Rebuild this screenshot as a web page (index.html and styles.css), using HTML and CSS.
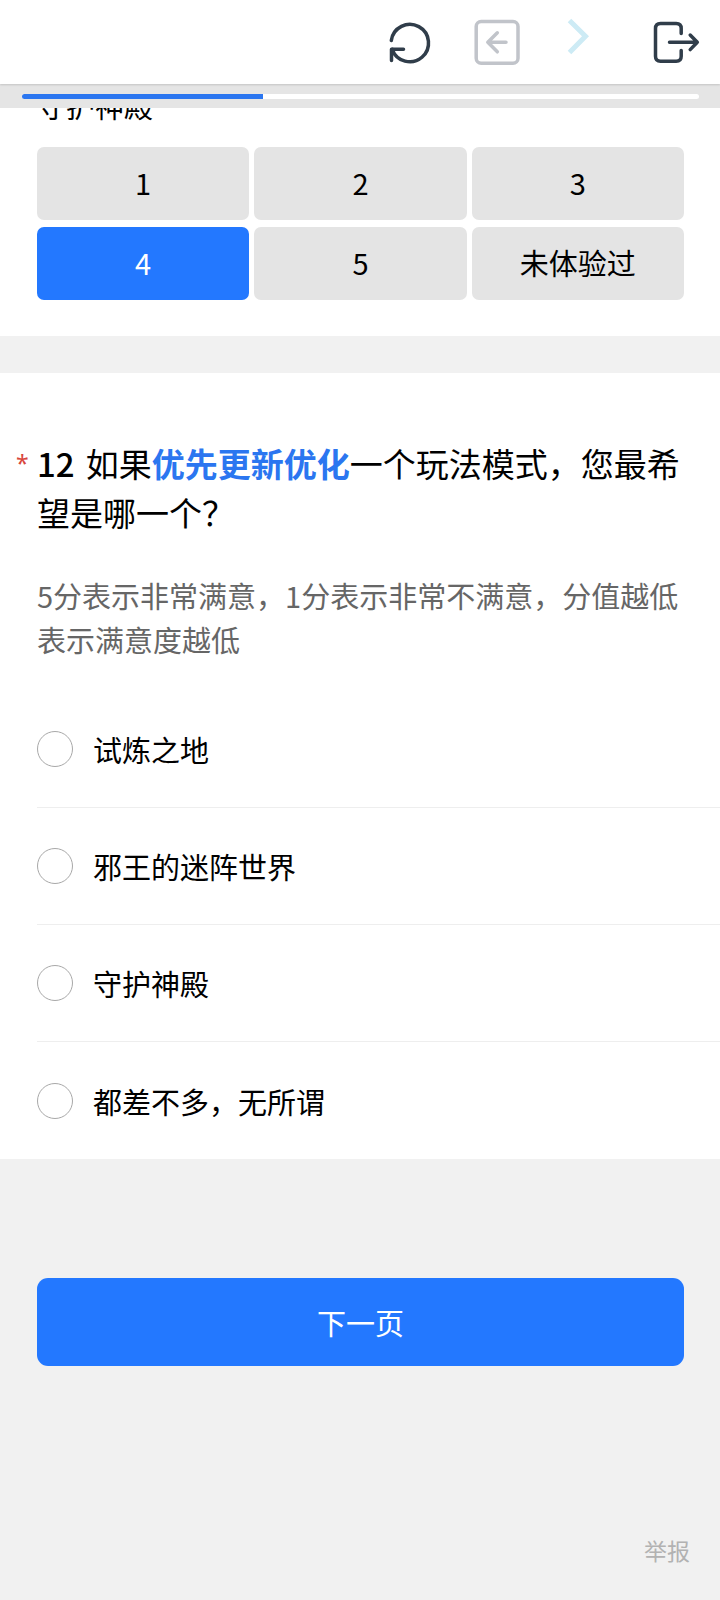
FILE: index.html
```html
<!DOCTYPE html>
<html lang="zh-CN">
<head>
    <meta charset="UTF-8">
    <meta name="viewport" content="width=device-width, initial-scale=1.0">
    <title>问卷调查</title>
    <link rel="stylesheet" href="styles.css">
</head>
<body>
    <header class="toolbar">
        <button type="button" class="tool" aria-label="刷新">
            <svg viewBox="0 0 50 50">
                <path d="M5.3 23.5A18.7 18.7 0 1 1 6.2 32.3"/>
                <path d="M5.5 43.6V32.3H17.5"/>
            </svg>
        </button>
        <button type="button" class="tool tool-back" aria-label="后退">
            <svg viewBox="0 0 50 50">
                <rect x="2.2" y="4.4" width="41.8" height="41.8" rx="5"/>
                <path d="M32 25.3H13.8M23.3 15.8L13.8 25.3L23.3 34.8"/>
            </svg>
        </button>
        <button type="button" class="tool tool-next" aria-label="前进">
            <svg viewBox="0 0 50 50">
                <path d="M7.5 3.5L23.5 19.3L7.5 35.5"/>
            </svg>
        </button>
        <button type="button" class="tool" aria-label="退出">
            <svg viewBox="0 0 50 50">
                <path d="M31.2 16.5V11.5Q31.2 6.5 26.2 6.5H10.5Q5.5 6.5 5.5 11.5V39.2Q5.5 44.2 10.5 44.2H26.2Q31.2 44.2 31.2 39.2V33.5"/>
                <path d="M19.5 25.3H47.3M40.2 18L47.3 25.3L40.2 32.6"/>
            </svg>
        </button>
    </header>

    <div class="progress">
        <div class="progress-track">
            <div class="progress-fill" style="width: 35.6%"></div>
        </div>
    </div>

    <main>
        <section class="card rating">
            <p class="rating-label">守护神殿</p>
            <div class="rating-grid">
                <button type="button" class="rate">1</button>
                <button type="button" class="rate">2</button>
                <button type="button" class="rate">3</button>
                <button type="button" class="rate active" aria-pressed="true">4</button>
                <button type="button" class="rate">5</button>
                <button type="button" class="rate">未体验过</button>
            </div>
        </section>

        <section class="card question">
            <div class="heading">
                <span class="required">*</span>
                <h2 class="title"><span class="number">12</span>如果<strong>优先更新优化</strong>一个玩法模式，您最希望是哪一个？</h2>
            </div>
            <p class="hint">5分表示非常满意，1分表示非常不满意，分值越低表示满意度越低</p>
            <div class="options">
                <label class="option"><input type="radio" name="q12">试炼之地</label>
                <label class="option"><input type="radio" name="q12">邪王的迷阵世界</label>
                <label class="option"><input type="radio" name="q12">守护神殿</label>
                <label class="option"><input type="radio" name="q12">都差不多，无所谓</label>
            </div>
        </section>
    </main>

    <footer class="footer">
        <button type="button" class="next">下一页</button>
        <a href="#" class="report">举报</a>
    </footer>
</body>
</html>
```

FILE: styles.css
```css
* {
    box-sizing: border-box;
}
body {
    margin: 0;
    background: #f1f1f1;
    color: #000;
    font-family: "Noto Sans CJK SC", sans-serif;
    font-size: 29px;
    line-height: 44px;
}
h2, p {
    margin: 0;
    font-weight: 400;
}
button {
    border: none;
    padding: 0;
    font: inherit;
    color: inherit;
    cursor: pointer;
}

/* top bar */
.toolbar {
    position: relative;
    z-index: 2;
    display: flex;
    justify-content: flex-end;
    align-items: center;
    gap: 38px;
    height: 84px;
    padding: 0 20px;
    background: #fff;
    box-shadow: 0 1px 2px rgba(0, 0, 0, 0.15);
}
.tool {
    width: 50px;
    height: 50px;
    background: none;
    color: #303d4a;
}
.tool svg {
    display: block;
    fill: none;
    stroke: currentColor;
    stroke-width: 3.5;
    stroke-linecap: round;
    stroke-linejoin: round;
}
.tool-back {
    color: #c1c4ca;
}
.tool-next {
    color: #cdebf5;
}
.tool-next svg {
    stroke-width: 5;
    stroke-linecap: butt;
    stroke-linejoin: miter;
}

.progress {
    position: relative;
    z-index: 1;
    padding: 10px 21px 9px 22px;
    background: #e5e5e5;
}
.progress-track {
    height: 5px;
    border-radius: 3px;
    background: #fff;
    overflow: hidden;
}
.progress-fill {
    height: 100%;
    background: #2b76f0;
}

.card {
    background: #fff;
}

/* rating */
.rating {
    padding: 0 36px 36px 37px;
}
.rating-label {
    margin-top: -25px;
    padding-bottom: 20px;
}
.rating-grid {
    display: grid;
    grid-template-columns: repeat(3, 1fr);
    gap: 7px 5px;
}
.rate {
    height: 73px;
    padding-bottom: 3px;
    border-radius: 7px;
    background: #e4e4e4;
}
.rate.active {
    background: #2378ff;
    color: #fff;
}

/* question */
.question {
    margin-top: 37px;
    padding: 66px 0 0 37px;
}
.heading {
    display: flex;
    margin-left: -21px;
    padding-right: 36px;
    line-height: 49px;
}
.required {
    flex: 0 0 21px;
    color: #d8473d;
    font-family: "Noto Sans", sans-serif;
    font-size: 23px;
}
.title {
    font-size: 33px;
}
.number {
    margin-right: 11px;
    font-weight: 500;
}
.title strong {
    color: #2b76f0;
    font-weight: 700;
}
.hint {
    margin-top: 36px;
    padding-right: 36px;
    color: #666;
}
.options {
    margin-top: 30px;
}
.option {
    display: flex;
    align-items: center;
    gap: 20px;
    height: 117px;
    border-bottom: 1px solid #eee;
    cursor: pointer;
}
.option:last-child {
    border-bottom: none;
}
.option input {
    appearance: none;
    width: 36px;
    height: 36px;
    margin: 0;
    border: 1px solid #a8a8a8;
    border-radius: 50%;
}
.option input:checked {
    border: 10px solid #2378ff;
}

/* footer */
.footer {
    padding: 119px 36px 26px 37px;
}
.next {
    display: block;
    width: 100%;
    height: 88px;
    border-radius: 11px;
    background: #2378ff;
    color: #fff;
}
.report {
    display: block;
    width: fit-content;
    margin: 162px -6px 0 auto;
    color: #b2b2b2;
    font-size: 23px;
    text-decoration: none;
}
```
